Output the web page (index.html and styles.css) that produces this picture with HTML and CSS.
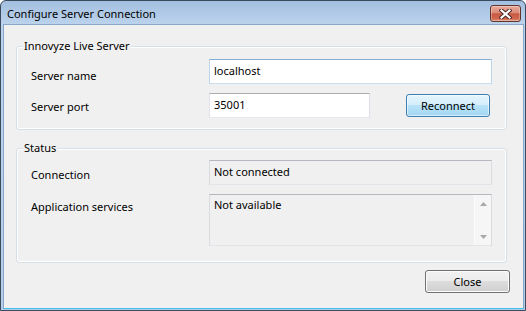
FILE: index.html
```html
<!DOCTYPE html>
<html lang="en">
<head>
<meta charset="utf-8">
<title>Configure Server Connection</title>
<link rel="stylesheet" href="styles.css">
</head>
<body>
<div class="window">
  <div class="titlebar">
    <span class="title">Configure Server Connection</span>
    <button class="title-close" aria-label="Close">
      <svg width="13" height="10" viewBox="0 0 13 10">
        <path d="M2.5 1.5 L10.5 8.5 M10.5 1.5 L2.5 8.5" stroke="#4a2a26" stroke-width="4.2" stroke-linecap="square"/>
        <path d="M2.5 1.5 L10.5 8.5 M10.5 1.5 L2.5 8.5" stroke="#ffffff" stroke-width="2.2" stroke-linecap="square"/>
      </svg>
    </button>
  </div>
  <div class="client">
    <section class="group">
      <div class="group-title">Innovyze Live Server</div>
      <div class="form-grid form-server">
        <label class="label label-name">Server name</label>
        <div class="textbox textbox-focus">localhost</div>
        <label class="label label-port">Server port</label>
        <div class="port-row">
          <div class="textbox textbox-port">35001</div>
          <button class="btn btn-hot">Reconnect</button>
        </div>
      </div>
    </section>
    <section class="group group-status">
      <div class="group-title">Status</div>
      <div class="form-grid form-status">
        <label class="label label-conn">Connection</label>
        <div class="textbox readonly">Not connected</div>
        <label class="label label-app">Application services</label>
        <div class="textbox readonly textbox-multi">
          <div class="multi-text">Not available</div>
          <div class="scrollbar">
            <div class="scroll-btn">
              <svg width="7" height="4" viewBox="0 0 7 4"><path d="M0 4 L3.5 0 L7 4 Z" fill="#a9a9a9"/></svg>
            </div>
            <div class="scroll-btn">
              <svg width="7" height="4" viewBox="0 0 7 4"><path d="M0 0 L3.5 4 L7 0 Z" fill="#a9a9a9"/></svg>
            </div>
          </div>
        </div>
      </div>
    </section>
    <div class="footer">
      <button class="btn btn-close">Close</button>
    </div>
  </div>
</div>
</body>
</html>
```
FILE: styles.css
```css
* { box-sizing: border-box; }
html, body { margin: 0; padding: 0; }
body {
  font-family: "Noto Sans", "DejaVu Sans", sans-serif;
  font-size: 11px;
  line-height: 16px;
  color: #000;
  background: #ffffff;
}
.window {
  width: 526px;
  height: 311px;
  border: 1px solid #3b4b5d;
  border-radius: 6px 6px 0 0;
  background: linear-gradient(180deg, #a3bfe0 0px, #bcd3ec 24px, #b4cde9 100%);
  display: flex;
  flex-direction: column;
}
.titlebar {
  height: 23px;
  display: flex;
  align-items: center;
  justify-content: space-between;
  padding: 0 4px 0 6px;
}
.title { color: #000; padding-top: 2px; }
.title-close {
  width: 31px;
  height: 17px;
  margin-top: 2px;
  padding: 0;
  border: 1px solid #5f352e;
  border-radius: 3px;
  background: linear-gradient(180deg, #e8ab9c 0%, #dc8b78 45%, #c85a43 52%, #d0674e 85%, #e39a7f 100%);
  box-shadow: inset 0 0 0 1px rgba(255, 255, 255, 0.3);
  display: flex;
  align-items: center;
  justify-content: center;
}
.client {
  flex: 1;
  margin: 0 1px 1px 2px;
  border: 1px solid #87a7cc;
  border-bottom-color: #3cc0ea;
  background: #f0f0f0;
  padding: 21px 12px 0 12px;
  display: flex;
  flex-direction: column;
}
.group {
  margin-right: 4px;
  border: 1px solid #d5dfe5;
  border-radius: 3px;
  box-shadow: inset 0 0 0 1px #ffffff;
}
.group-status { margin-top: 18px; }
.group-title {
  margin: -9px 0 0 6px;
  padding: 0 1px;
  width: fit-content;
  background: #f0f0f0;
}
.form-grid {
  display: grid;
  grid-template-columns: 178px 283px;
  row-gap: 9px;
  padding-left: 14px;
}
.form-server { padding-top: 5px; padding-bottom: 11px; }
.form-status { padding-top: 4px; padding-bottom: 16px; }
.label { display: block; }
.label-name { padding-top: 9px; }
.label-port { padding-top: 6px; }
.label-conn { padding-top: 7px; }
.label-app { padding-top: 5px; }
.textbox {
  height: 25px;
  border: 1px solid;
  border-color: #abadb3 #dbdfe6 #e3e9ef #e2e3ea;
  padding: 3px 4px 0;
  background: #ffffff;
  white-space: nowrap;
}
.textbox-focus { border-color: #86afd4 #bcd5ea #c9deef #bcd5ea; }
.textbox-port { width: 161px; }
.readonly {
  background: #f0f0f0;
  border-color: #b5b8bf #d8dbe0 #e1e4e8 #d8dbe0;
}
.textbox-multi {
  height: 52px;
  padding: 0;
  display: flex;
}
.multi-text { flex: 1; padding: 2px 4px 0; }
.scrollbar {
  width: 17px;
  display: flex;
  flex-direction: column;
  justify-content: space-between;
  background: #f6f6f6;
  border-left: 1px solid #fbfbfb;
}
.scroll-btn {
  height: 17px;
  display: flex;
  align-items: center;
  justify-content: center;
}
.port-row {
  display: flex;
  align-items: center;
  justify-content: space-between;
  padding-right: 2px;
}
.btn {
  font: inherit;
  color: #000;
  height: 23px;
  padding: 0;
  border-radius: 3px;
}
.btn-hot {
  width: 84px;
  border: 1px solid #3c7fb1;
  background: linear-gradient(180deg, #e5f5fd 0%, #d3eefb 50%, #b8e3f9 50%, #a2d6f3 100%);
  box-shadow: inset 0 0 0 1px rgba(255, 255, 255, 0.55);
}
.footer {
  display: flex;
  justify-content: flex-end;
  margin-top: 7px;
  margin-right: 1px;
}
.btn-close {
  width: 85px;
  border: 1px solid #707070;
  background: linear-gradient(180deg, #f2f2f2 0%, #ebebeb 50%, #dddddd 50%, #cfcfcf 100%);
  box-shadow: inset 0 0 0 1px #fcfcfc;
}
```
